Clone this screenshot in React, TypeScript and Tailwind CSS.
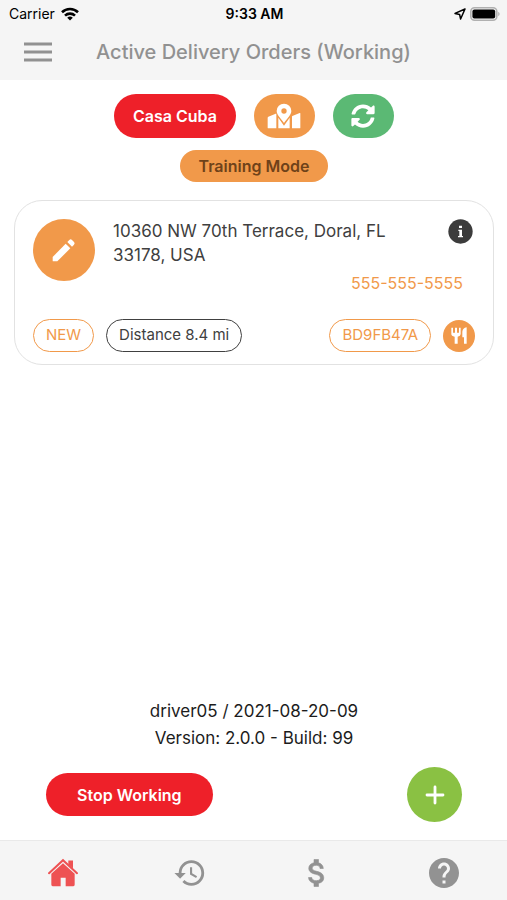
import * as React from "react"
import { FaSyncAlt } from "react-icons/fa"
import { MdHelp, MdHistory } from "react-icons/md"

interface Order {
  id: string
  address: string
  phone: string
  status: string
  distance: string
}

const orders: Order[] = [
  {
    id: "BD9FB47A",
    address: "10360 NW 70th Terrace, Doral, FL 33178, USA",
    phone: "555-555-5555",
    status: "NEW",
    distance: "8.4 mi",
  },
]

function HomeIcon() {
  return (
    <svg className="h-[29px] w-[30px]" viewBox="0 0 90 86" fill="currentColor">
      <path d="M3 45 45 6l42 39" fill="none" stroke="currentColor" strokeWidth="6" strokeLinecap="round" />
      <path d="M61 7h14v24L61 18z" />
      <path d="M45 15 80 47v33q0 4-4 4H53V59H38v25H14q-4 0-4-4V47z" />
    </svg>
  )
}

function DollarIcon() {
  return (
    <svg className="size-9" viewBox="0 0 24 24" fill="currentColor" stroke="currentColor" strokeWidth="0.4">
      <path d="M11.8 10.9c-2.27-.59-3-1.2-3-2.15 0-1.09 1.01-1.85 2.7-1.85 1.78 0 2.44.85 2.5 2.1h2.21c-.07-1.72-1.12-3.3-3.21-3.81V3h-3v2.16c-1.94.42-3.5 1.68-3.5 3.61 0 2.31 1.91 3.46 4.7 4.13 2.5.6 3 1.48 3 2.41 0 .69-.49 1.79-2.7 1.79-2.06 0-2.87-.92-2.98-2.1h-2.2c.12 2.19 1.76 3.42 3.68 3.83V21h3v-2.15c1.95-.37 3.5-1.5 3.5-3.55 0-2.84-2.43-3.81-4.7-4.4z" />
    </svg>
  )
}

function MapIcon() {
  return (
    <svg className="h-[26px] w-[34px]" viewBox="0 0 102 78" fill="currentColor">
      <path d="M2 44q0-2 2-3l22-9q2-1 2 1v43H4q-2 0-2-2z" />
      <path d="M34 44 51 68 68 44v32H34z" />
      <path d="M75 41q0-1 1-2l22-9q2-1 2 1v43q0 2-2 2H75z" />
      <path
        fillRule="evenodd"
        d="M51 2a22 22 0 0 0-22 22c0 11 14 25 22 36 8-11 22-25 22-36A22 22 0 0 0 51 2zm0 14a8 8 0 1 1 0 16 8 8 0 0 1 0-16z"
      />
    </svg>
  )
}

function PencilIcon() {
  return (
    <svg className="size-6" viewBox="0 0 72 72" fill="currentColor">
      <path d="M2 57 41 17l14 14-39 39H3q-1 0-1-1z" />
      <path d="m46 12 6-6q4-4 8 0l6 6q4 4 0 8l-6 6z" />
    </svg>
  )
}

function InfoIcon() {
  return (
    <svg className="size-[25px]" viewBox="0 0 75 75">
      <circle cx="37.5" cy="37.5" r="36.500" fill="currentColor" />
      <path d="M33 20h9v7h-9zM31 32h11v19h3v4H30v-4h4V36h-3z" fill="#fff" />
    </svg>
  )
}

function UtensilsIcon() {
  return (
    <svg className="h-[17px] w-4" viewBox="0 0 48 51" fill="currentColor">
      <path d="M1 2h5v15h6V2h6v15h6V2h5v19q0 6-9 8v21h-9V29Q1 27 1 21z" />
      <path d="M47 1v49h-8V31h-5V14Q35 3 47 1z" />
    </svg>
  )
}

const tabs = [
  { id: "home", label: "Home", icon: <HomeIcon /> },
  { id: "history", label: "History", icon: <MdHistory className="size-[34px]" /> },
  { id: "earnings", label: "Earnings", icon: <DollarIcon /> },
  { id: "help", label: "Help", icon: <MdHelp className="size-9" /> },
]

function StatusBar() {
  return (
    <div className="grid h-7 grid-cols-3 items-center pr-[7px] pl-[9px] text-sm text-black">
      <div className="flex items-center gap-[6px]">
        <span>Carrier</span>
        <svg className="h-[14px] w-[18px]" viewBox="0 0 18 14" fill="none" stroke="currentColor" strokeWidth="2.6">
          <path d="M1 5.2a11.5 11.5 0 0 1 16 0" />
          <path d="M4 8.6a7.2 7.2 0 0 1 10 0" />
          <path d="M9 13.6 6.2 10.8a4 4 0 0 1 5.6 0z" fill="currentColor" stroke="none" />
        </svg>
      </div>
      <span className="text-center font-semibold">9:33 AM</span>
      <div className="flex items-center justify-end gap-1">
        <svg className="size-3" viewBox="0 0 12 12" fill="none" stroke="currentColor" strokeWidth="1.5" strokeLinejoin="round">
          <path d="M11 1 1 5.4l4.6 1L6.6 11z" />
        </svg>
        <svg className="h-[14px] w-[30px]" viewBox="0 0 30 14">
          <rect x="0.8" y="0.8" width="26" height="12.4" rx="3.8" fill="#f5f5f5" stroke="#b0b0b0" strokeWidth="1.6" />
          <rect x="2.4" y="2.4" width="22.8" height="9.2" rx="2" fill="#000" />
          <path d="M28.3 4.8v4.4c1.7-.8 1.7-3.6 0-4.4z" fill="#a8a8a8" />
        </svg>
      </div>
    </div>
  )
}

function OrderCard({ order }: { order: Order }) {
  return (
    <article className="rounded-[28px] border border-[#e2e2e2] bg-white px-[18px] pt-[18px] pb-3">
      <div className="flex items-start gap-[18px]">
        <button
          aria-label="Edit order"
          className="flex size-[62px] shrink-0 items-center justify-center rounded-full bg-[#f1994a] text-white"
        >
          <PencilIcon />
        </button>
        <div className="flex-1">
          <div className="flex items-start">
            <p className="flex-1 pr-8 text-[17px] leading-6 text-[#404040]">{order.address}</p>
            <button aria-label="Order details" className="mr-[2px] text-[#3c3c3c]">
              <InfoIcon />
            </button>
          </div>
          <div className="mt-1 flex justify-end pr-3">
            <a href={`tel:${order.phone}`} className="text-base text-[#f1994a]">
              {order.phone}
            </a>
          </div>
        </div>
      </div>
      <div className="mt-6 flex items-center gap-3 text-[15px]">
        <span className="flex h-[33px] items-center rounded-full border border-[#f1994a] px-3 text-[#f1994a]">
          {order.status}
        </span>
        <span className="flex h-[33px] items-center rounded-full border border-[#404040] px-3 text-[#404040]">
          Distance {order.distance}
        </span>
        <span className="ml-auto flex h-[33px] items-center rounded-full border border-[#f1994a] px-3 text-[#f1994a]">
          {order.id}
        </span>
        <button
          aria-label="Restaurant"
          className="flex size-8 items-center justify-center rounded-full bg-[#f1994a] text-white"
        >
          <UtensilsIcon />
        </button>
      </div>
    </article>
  )
}

export default function App() {
  const [activeTab, setActiveTab] = React.useState("home")

  return (
    <div className="flex min-h-screen flex-col bg-white font-['Inter','Liberation_Sans',sans-serif]">
      <header className="bg-[#f5f5f5] pb-1">
        <StatusBar />
        <div className="grid h-12 grid-cols-[28px_1fr_28px] items-center px-6">
          <button aria-label="Menu" className="text-[#919191]">
            <svg className="h-5 w-7" viewBox="0 0 28 20" stroke="currentColor" strokeWidth="2.8">
              <path d="M0 2h28M0 10h28M0 18h28" />
            </svg>
          </button>
          <h1 className="text-center text-xl font-medium text-[#919191]">Active Delivery Orders (Working)</h1>
        </div>
      </header>

      <main className="flex flex-1 flex-col pt-[14px] pr-[13px] pl-[14px]">
        <div className="flex justify-center gap-[18px]">
          <button className="h-11 rounded-full bg-[#ee2029] px-[19px] text-base font-semibold text-white">
            Casa Cuba
          </button>
          <button
            aria-label="Map"
            className="flex h-11 w-[61px] items-center justify-center rounded-full bg-[#f1994a] text-white"
          >
            <MapIcon />
          </button>
          <button
            aria-label="Refresh"
            className="flex h-11 w-[61px] items-center justify-center rounded-full bg-[#5bb974] text-white"
          >
            <FaSyncAlt className="size-6" />
          </button>
        </div>

        <div className="mt-3 flex justify-center">
          <span className="flex h-8 items-center rounded-full bg-[#f1994a] px-[19px] text-base font-semibold text-[#6f4219]">
            Training Mode
          </span>
        </div>

        <section className="mt-[18px] flex flex-col gap-3">
          {orders.map((order) => (
            <OrderCard key={order.id} order={order} />
          ))}
        </section>

        <div className="mt-auto text-center text-[17px] leading-[27px] text-[#1c1c1c]">
          <p>driver05 / 2021-08-20-09</p>
          <p>Version: 2.0.0 - Build: 99</p>
        </div>

        <div className="mt-[15px] mb-[18px] flex items-center justify-between px-8">
          <button className="h-[43px] rounded-full bg-[#ee2029] px-[31px] text-base font-semibold text-white">
            Stop Working
          </button>
          <button
            aria-label="Add order"
            className="flex size-[55px] items-center justify-center rounded-full bg-[#8ac143] text-white"
          >
            <svg className="size-5" viewBox="0 0 20 20" stroke="currentColor" strokeWidth="2.8" strokeLinecap="round">
              <path d="M10 2v16M2 10h16" />
            </svg>
          </button>
        </div>
      </main>

      <nav className="grid h-[60px] grid-cols-4 border-t border-[#e9e9e9] bg-[#f5f5f5]">
        {tabs.map((tab) => (
          <button
            key={tab.id}
            aria-label={tab.label}
            onClick={() => setActiveTab(tab.id)}
            className={`flex items-center justify-center pt-1 ${activeTab === tab.id ? "text-[#ee5253]" : "text-[#929292]"}`}
          >
            {tab.icon}
          </button>
        ))}
      </nav>
    </div>
  )
}
